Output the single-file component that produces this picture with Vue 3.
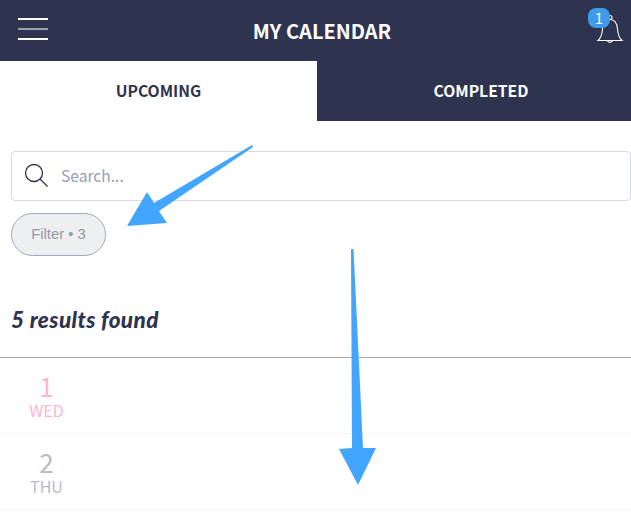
<template>
  <div class="page">
    <header class="top-bar">
      <button class="menu-btn" aria-label="Menu">
        <span class="menu-line"></span>
        <span class="menu-line dim"></span>
        <span class="menu-line"></span>
      </button>
      <h1 class="title">MY CALENDAR</h1>
      <div class="bell">
        <svg width="28" height="32" viewBox="0 0 28 32" fill="none" stroke="#fff" stroke-width="1.1">
          <path d="M2 27.500c3-2.500 4-6 4.500-11.500C7 10 9.500 6.500 14 6.500S21 10 21.500 16c.5 5.500 1.500 9 4.500 11.500z" />
          <path d="M11.500 27.700a2.800 2.800 0 0 0 5 0" />
          <circle cx="14" cy="4.500" r="2" />
        </svg>
        <span class="badge">1</span>
      </div>
    </header>

    <div class="tabs">
      <div
        v-for="tab in tabs"
        :key="tab"
        class="tab"
        :class="{ active: tab === activeTab }"
      >{{ tab }}</div>
    </div>

    <div class="search-area">
      <div class="search-box">
        <svg class="search-icon" width="26" height="26" viewBox="0 0 26 26" fill="none" stroke="#2e3350" stroke-width="1.3">
          <circle cx="10" cy="10" r="8.500" />
          <path d="M16 16l7.500 7.500" />
        </svg>
        <span class="placeholder">Search...</span>
      </div>
      <button class="filter-btn">Filter • 3</button>
    </div>

    <p class="results">5 results found</p>

    <div class="day-list">
      <div v-for="day in days" :key="day.num" class="day-row" :class="{ today: day.today }">
        <div class="day-cell">
          <span class="day-num">{{ day.num }}</span>
          <span class="day-name">{{ day.name }}</span>
        </div>
      </div>
    </div>

    <svg class="arrows" width="631" height="518" viewBox="0 0 631 518">
      <polygon points="252,145 253,147 159,211 167,223 127,226 147,192 154,203" fill="#42a5ff" />
      <polygon points="351,249 353.500,249 363,448 376,448 358,485 339,449 352,448" fill="#42a5ff" />
    </svg>
  </div>
</template>

<script setup>
const tabs = ['UPCOMING', 'COMPLETED']
const activeTab = 'UPCOMING'

const days = [
  { num: 1, name: 'WED', today: true },
  { num: 2, name: 'THU', today: false }
]
</script>

<style>
html,
body {
  margin: 0;
  background: #fff;
  overflow: hidden;
}
</style>

<style scoped>
.page {
  position: relative;
  width: 631px;
  height: 518px;
  overflow: hidden;
  background: #fff;
  color: #2e3350;
  font-family: "Noto Sans CJK JP", "Noto Sans", sans-serif;
}

.top-bar {
  height: 61px;
  background: #2e3350;
  display: flex;
  align-items: center;
  justify-content: space-between;
  padding: 0 7px 0 18px;
}

.menu-btn {
  width: 30px;
  height: 22px;
  padding: 0;
  border: none;
  background: none;
  display: flex;
  flex-direction: column;
  justify-content: space-between;
  margin-top: -3px;
}

.menu-line {
  display: block;
  height: 2px;
  background: #fff;
}

.menu-line.dim {
  background: #9ea1b1;
}

.title {
  margin: 0;
  color: #fff;
  font-size: 20px;
  font-weight: 700;
  line-height: 59px;
}

.bell {
  position: relative;
  width: 28px;
  height: 30px;
  margin-top: -6px;
}

.badge {
  position: absolute;
  left: -8px;
  top: -5px;
  width: 22px;
  height: 20px;
  border-radius: 8px;
  background: #3d9be9;
  color: #fff;
  font-size: 15px;
  line-height: 20px;
  text-align: center;
}

.tabs {
  display: flex;
  height: 60px;
}

.tab {
  flex: 1;
  padding-left: 14px;
  background: #2e3350;
  color: #fff;
  font-size: 15.700px;
  font-weight: 700;
  line-height: 60px;
  text-align: center;
}

.tab.active {
  flex: 0 0 317px;
  padding-left: 0;
  background: #fff;
  color: #2e3350;
}

.search-area {
  padding: 30px 0 0 11px;
}

.search-box {
  height: 48px;
  border: 1px solid #d8d9e2;
  border-radius: 4px;
  display: flex;
  align-items: center;
  padding-left: 12px;
  gap: 11px;
}

.placeholder {
  font-size: 15.600px;
  color: #9a9caf;
  margin-top: -3px;
}

.filter-btn {
  display: block;
  width: 95px;
  height: 43px;
  margin-top: 12px;
  padding: 0 0 2px;
  border: 1px solid #a5a7b8;
  border-radius: 22px;
  background: #eeeff1;
  color: #9597a6;
  font-family: "Liberation Sans", Arial, sans-serif;
  font-size: 14.800px;
}

.results {
  margin: 50px 0 0 11px;
  height: 28px;
  font-family: Lato, sans-serif;
  font-size: 22.500px;
  font-weight: 900;
  font-style: italic;
  letter-spacing: 0.4px;
  line-height: 28px;
}

.day-list {
  margin-top: 23px;
  border-top: 1px solid #a5a7b8;
}

.day-row {
  height: 75px;
  border-bottom: 1px solid #f4f4f6;
  display: flex;
  align-items: center;
}

.day-cell {
  width: 93px;
  display: flex;
  flex-direction: column;
  align-items: center;
  color: #b9bbc8;
}

.today .day-cell {
  color: #ffb6cc;
}

.day-num {
  font-size: 26px;
  line-height: 28px;
}

.day-name {
  font-size: 16px;
  line-height: 20px;
}

.arrows {
  position: absolute;
  left: 0;
  top: 0;
  pointer-events: none;
}
</style>
